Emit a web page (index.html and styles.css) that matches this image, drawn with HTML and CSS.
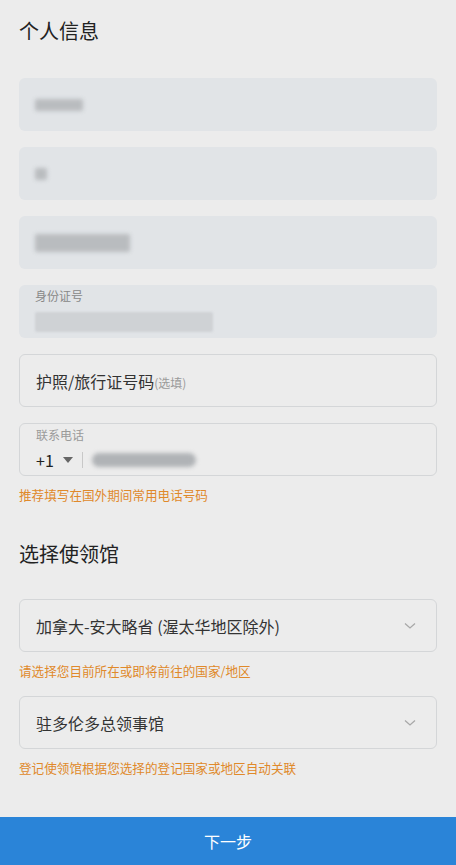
FILE: index.html
```html
<!DOCTYPE html>
<html lang="zh-CN">
<head>
    <meta charset="UTF-8">
    <meta name="viewport" content="width=device-width, initial-scale=1.0">
    <title>个人信息</title>
    <link rel="stylesheet" href="styles.css">
</head>
<body>
    <div class="page">
        <!-- 个人信息 -->
        <h2 class="section-title first">个人信息</h2>

        <div class="field filled">
            <span class="blur" style="width: 48px; height: 12px;"></span>
        </div>
        <div class="field filled">
            <span class="blur" style="width: 12px; height: 12px;"></span>
        </div>
        <div class="field filled">
            <span class="blur" style="width: 95px; height: 18px;"></span>
        </div>
        <div class="field filled labeled">
            <span class="field-label">身份证号</span>
            <span class="blur" style="width: 178px; height: 20px;"></span>
        </div>

        <div class="field outlined">
            <span class="field-value">护照/旅行证号码<small class="optional">(选填)</small></span>
        </div>

        <div class="field outlined labeled">
            <span class="field-label">联系电话</span>
            <div class="phone-row">
                <span class="code">+1</span>
                <span class="caret"></span>
                <span class="divider"></span>
                <span class="blur phone" style="width: 104px; height: 14px;"></span>
            </div>
        </div>
        <p class="hint">推荐填写在国外期间常用电话号码</p>

        <!-- 选择使领馆 -->
        <h2 class="section-title">选择使领馆</h2>

        <div class="field outlined select">
            <span class="field-value">加拿大-安大略省 (渥太华地区除外)</span>
            <svg class="chevron" width="12" height="8" viewBox="0 0 12 8"><path d="M1 1.5 L6 6 L11 1.5" fill="none" stroke="#a8a8a8" stroke-width="1.3"/></svg>
        </div>
        <p class="hint">请选择您目前所在或即将前往的国家/地区</p>

        <div class="field outlined select">
            <span class="field-value">驻多伦多总领事馆</span>
            <svg class="chevron" width="12" height="8" viewBox="0 0 12 8"><path d="M1 1.5 L6 6 L11 1.5" fill="none" stroke="#a8a8a8" stroke-width="1.3"/></svg>
        </div>
        <p class="hint">登记使领馆根据您选择的登记国家或地区自动关联</p>
    </div>

    <button class="next-btn" type="button">下一步</button>
</body>
</html>
```

FILE: styles.css
```css
body {
    font-family: "Noto Sans CJK SC", "Noto Sans", sans-serif;
    background-color: #ececec;
    margin: 0;
    padding: 0;
    color: #333;
}
.page {
    padding: 0 19px 60px;
}
.section-title {
    font-size: 20px;
    font-weight: 400;
    line-height: 28px;
    color: #222;
    margin: 36px 0 31px;
}
.section-title.first {
    margin-top: 0;
    padding-top: 17px;
    margin-bottom: 33px;
}
.field {
    box-sizing: border-box;
    height: 53px;
    border-radius: 6px;
    margin-bottom: 16px;
    padding: 0 16px;
    display: flex;
    align-items: center;
}
.field.filled {
    background-color: #e1e4e7;
}
.field.outlined {
    border: 1px solid #d4d6d8;
    background-color: #ececec;
}
.field.labeled {
    flex-direction: column;
    align-items: flex-start;
    justify-content: flex-start;
    padding-top: 3px;
}
.field-label {
    font-size: 12px;
    line-height: 16px;
    color: #9a9a9a;
}
.field.filled .field-label {
    color: #888;
}
.field-value {
    font-size: 16px;
    color: #333;
}
.optional {
    font-size: 12px;
    color: #9a9a9a;
}
.blur {
    display: block;
    background-color: #b9bcbf;
    filter: blur(2px);
    border-radius: 2px;
}
.field.filled.labeled .blur {
    margin-top: 8px;
    background-color: #cfd2d5;
    filter: blur(1px);
}
.phone-row {
    display: flex;
    align-items: center;
    margin-top: 6px;
    height: 22px;
}
.code {
    font-size: 16px;
    color: #222;
}
.caret {
    width: 0;
    height: 0;
    border-left: 5px solid transparent;
    border-right: 5px solid transparent;
    border-top: 6px solid #666;
    margin-left: 9px;
}
.divider {
    width: 1px;
    height: 16px;
    background-color: #c8c8c8;
    margin: 0 9px 0 9px;
}
.blur.phone {
    background-color: #b0b3b6;
    border-radius: 7px;
}
.hint {
    font-size: 12.6px;
    color: #e0892a;
    margin: -6px 0 0;
    line-height: 18px;
}
.field.select {
    justify-content: space-between;
    margin-bottom: 16px;
}
.field.select + .hint {
    margin-bottom: 16px;
}
.chevron {
    margin-right: 4px;
}
.next-btn {
    position: fixed;
    left: 0;
    right: 0;
    bottom: 0;
    height: 48px;
    width: 100%;
    border: none;
    background-color: #2a84d8;
    color: #fff;
    font-family: inherit;
    font-size: 16px;
    cursor: pointer;
}
```
